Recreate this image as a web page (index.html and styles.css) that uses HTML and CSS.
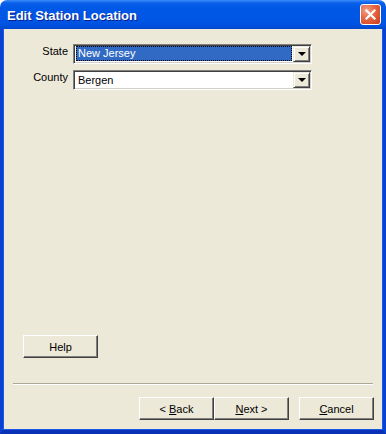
FILE: index.html
```html
<!DOCTYPE html>
<html>
<head>
<meta charset="utf-8">
<link rel="stylesheet" href="styles.css">
</head>
<body>
<div class="window">
  <div class="titlebar">
    <span class="title">Edit Station Location</span>
    <span class="close">
      <svg width="13" height="13" viewBox="0 0 13 13"><path d="M2.5 2.5 L10.5 10.5 M10.5 2.5 L2.5 10.5" stroke="#fff" stroke-width="2.2" stroke-linecap="square"/></svg>
    </span>
  </div>
  <div class="body">
    <div class="form">
      <div class="row">
        <span class="label">State</span>
        <div class="combo">
          <div class="field"><span class="selected">New Jersey</span></div>
          <span class="drop"><span class="arrow"></span></span>
        </div>
      </div>
      <div class="row">
        <span class="label">County</span>
        <div class="combo">
          <div class="field"><span class="value">Bergen</span></div>
          <span class="drop"><span class="arrow"></span></span>
        </div>
      </div>
    </div>
    <div class="help-row">
      <button class="btn">Help</button>
    </div>
    <div class="separator"></div>
    <div class="buttons">
      <button class="btn">&lt; <u>B</u>ack</button>
      <button class="btn"><u>N</u>ext &gt;</button>
      <button class="btn gap"><u>C</u>ancel</button>
    </div>
  </div>
</div>
</body>
</html>
```

FILE: styles.css
```css
html, body {
  margin: 0;
  padding: 0;
  background: #ffffff;
}
.window {
  width: 386px;
  height: 434px;
  display: flex;
  flex-direction: column;
  font-family: "Liberation Sans", Arial, sans-serif;
  font-size: 11px;
  color: #000;
}
.titlebar {
  height: 29px;
  flex: none;
  box-sizing: border-box;
  border-radius: 7px 7px 0 0;
  background: linear-gradient(to bottom, #3b8cf8 0px, #0a5fe9 3px, #0058e6 8px, #0055e5 20px, #0050dd 26px, #0447c9 29px);
  display: flex;
  align-items: center;
  padding: 0 5px 0 7px;
}
.title {
  flex: 1;
  color: #fff;
  font-family: "Liberation Sans", Arial, sans-serif;
  font-weight: bold;
  font-size: 13px;
  text-shadow: 1px 1px 0 #0a1e8c;
  margin-top: 1px;
}
.close {
  width: 21px;
  height: 21px;
  box-sizing: border-box;
  border: 1px solid #fff;
  border-radius: 3px;
  background: radial-gradient(circle at 30% 30%, #f0a48c 0%, #e66a48 40%, #d64a26 80%, #c23c1c 100%);
  display: flex;
  align-items: center;
  justify-content: center;
}
.body {
  flex: 1;
  display: flex;
  flex-direction: column;
  background: #ece9d8;
  border-left: 3px solid #0842d0;
  border-right: 3px solid #0842d0;
  border-bottom: 4px solid #0831b8;
  box-shadow: inset 1px 0 0 #1a5ae6, inset -1px 0 0 #1a5ae6, inset 0 -1px 0 #1a5ae6;
}
.form {
  padding: 15px 0 0 0;
  display: flex;
  flex-direction: column;
  gap: 6px;
}
.row {
  display: flex;
  align-items: flex-start;
}
.label {
  width: 65px;
  text-align: right;
  margin-right: 5px;
  line-height: 13px;
  margin-top: 1px;
}
.combo {
  width: 239px;
  height: 20px;
  box-sizing: border-box;
  display: flex;
  align-items: center;
  background: #fff;
  border-top: 1px solid #808080;
  border-left: 1px solid #808080;
  border-right: 1px solid #fff;
  border-bottom: 1px solid #fff;
  box-shadow: inset 1px 1px 0 #404040, inset -1px -1px 0 #d4d0c8;
  padding: 1px 1px 2px 1px;
}
.field {
  flex: 1;
  height: 100%;
  display: flex;
  align-items: stretch;
  padding-left: 1px;
}
.selected {
  flex: 1;
  background: #316ac5;
  color: #fff;
  outline: 1px dotted #000;
  outline-offset: -1px;
  padding-left: 2px;
  line-height: 15px;
  margin-right: 1px;
}
.value {
  padding-left: 2px;
  line-height: 16px;
}
.drop {
  width: 17px;
  height: 16px;
  box-sizing: border-box;
  background: #ece9d8;
  border-top: 1px solid #ece9d8;
  border-left: 1px solid #ece9d8;
  border-right: 1px solid #404040;
  border-bottom: 1px solid #404040;
  box-shadow: inset 1px 1px 0 #fff, inset -1px -1px 0 #808080;
  display: flex;
  align-items: center;
  justify-content: center;
}
.arrow {
  width: 0;
  height: 0;
  border-left: 4px solid transparent;
  border-right: 4px solid transparent;
  border-top: 4px solid #000;
  margin-top: 1px;
}
.help-row {
  margin-top: auto;
  padding-left: 20px;
}
.btn {
  width: 75px;
  height: 23px;
  box-sizing: border-box;
  margin: 0;
  padding: 0;
  font-family: "Liberation Sans", Arial, sans-serif;
  font-size: 11px;
  color: #000;
  background: #ece9d8;
  border-top: 1px solid #fff;
  border-left: 1px solid #fff;
  border-right: 1px solid #404040;
  border-bottom: 1px solid #404040;
  box-shadow: inset -1px -1px 0 #808080;
}
.separator {
  margin: 25px 10px 0 10px;
  height: 1px;
  background: #aca899;
  border-bottom: 1px solid #fff;
}
.buttons {
  display: flex;
  justify-content: flex-end;
  padding: 12px 9px 10px 0;
}
.btn.gap {
  margin-left: 10px;
}
u {
  text-decoration: underline;
}
```
